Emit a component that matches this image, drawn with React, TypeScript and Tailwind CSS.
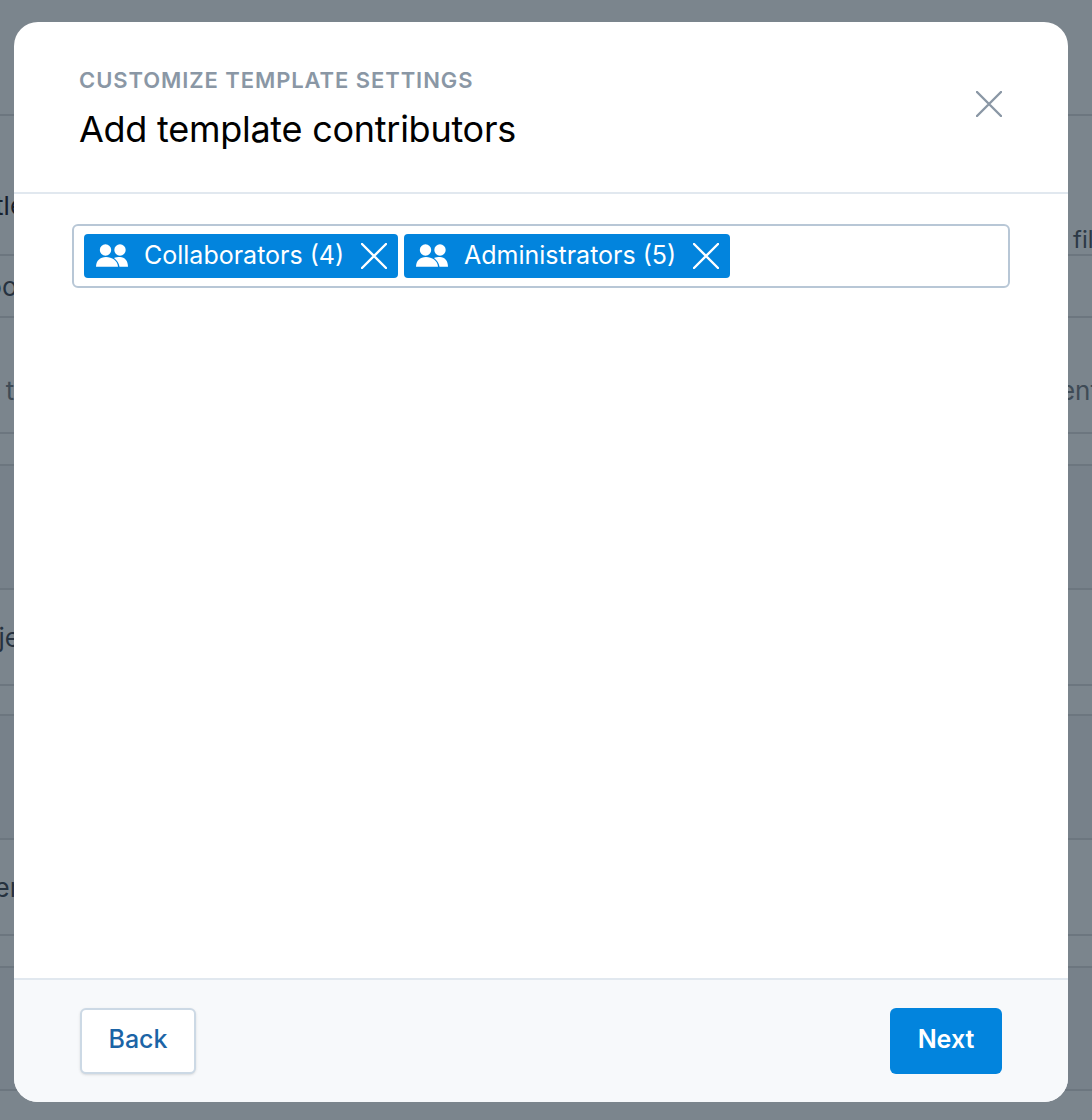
const font = { fontFamily: 'Inter, sans-serif' };

const rows = [
  { h: 'h-[116px]', bg: 'bg-[#7b858d]', left: '', right: '' },
  { h: 'h-[140px]', bg: 'bg-[#7b858d]', left: 'Title', right: '', leftCls: 'text-[#16202c] -ml-[28px]', align: 'items-start pt-[70px]' },
  { h: 'h-[62px]', bg: 'bg-[#7b858d]', left: 'Food', right: '', leftCls: 'text-[#26323f] -ml-[28px]', align: 'items-center' },
  { h: 'h-[116px]', bg: 'bg-[#7b858d]', left: 'Set t', right: 'Content', leftCls: 'text-[#3f4b56] -ml-[42px]', rightCls: 'text-[#3f4b56] -mr-[7px]', align: 'items-start pt-[53px]' },
  { h: 'h-[32px]', bg: 'bg-[#7b858d]', left: '', right: '' },
  { h: 'h-[124px]', bg: 'bg-[#77818a]', left: '', right: '' },
  { h: 'h-[96px]', bg: 'bg-[#7b858d]', left: 'Project', right: '', leftCls: 'text-[#26323f] -ml-[43px]', align: 'items-center' },
  { h: 'h-[30px]', bg: 'bg-[#7b858d]', left: '', right: '' },
  { h: 'h-[124px]', bg: 'bg-[#77818a]', left: '', right: '' },
  { h: 'h-[96px]', bg: 'bg-[#7b858d]', left: 'Owner', right: '', leftCls: 'text-[#26323f] -ml-[62px]', align: 'items-center' },
  { h: 'h-[32px]', bg: 'bg-[#7b858d]', left: '', right: '' },
  { h: 'h-[123px]', bg: 'bg-[#77818a]', left: '', right: '' },
];

function Users() {
  return (
    <svg width="32" height="24" viewBox="0 0 32 24" fill="white" aria-hidden="true">
      <circle cx="9.500" cy="6" r="5.700" />
      <circle cx="24" cy="6" r="5.700" />
      <path d="M0 22.800c0-6 4-9.800 10-9.800S21.500 16.500 22 22.800z" />
      <path d="M18 14c1.700-.7 3.800-1 6-1 4.800 0 8 3.800 8 9.800h-8.500c-.5-3.500-2.300-6.300-5.500-8.800z" />
    </svg>
  );
}

function Cross({ size, color, width }: { size: number; color: string; width: number }) {
  return (
    <svg width={size} height={size} viewBox={`0 0 ${size} ${size}`} fill="none" stroke={color} strokeWidth={width} strokeLinecap="round" aria-hidden="true">
      <path d={`M1 1L${size - 1} ${size - 1}M${size - 1} 1L1 ${size - 1}`} />
    </svg>
  );
}

function Chip({ label, w }: { label: string; w: string }) {
  return (
    <div className={`flex h-[44px] items-center rounded-[4px] bg-[#0284dd] pl-[12px] text-white ${w}`}>
      <Users />
      <span className="mb-[2px] ml-[16px] whitespace-nowrap text-[25px] leading-none">{label}</span>
      <span className="ml-auto mr-[11px]">
        <Cross size={26} color="white" width={2.400} />
      </span>
    </div>
  );
}

export default function App() {
  return (
    <div className="relative h-[1120px] w-[1092px] overflow-hidden bg-[#7b858d]" style={font}>
      <div className="flex flex-col">
        {rows.map((r, i) => (
          <div key={i} className={`flex justify-between border-b-2 border-[#6c767f] text-[26px] ${r.h} ${r.bg} ${r.align ?? ''}`}>
            <span className={`whitespace-nowrap ${r.leftCls ?? ''}`}>{r.left}</span>
            {r.right && <span className={`whitespace-nowrap ${r.rightCls ?? ''}`}>{r.right}</span>}
          </div>
        ))}
      </div>
      <span className="absolute left-[1073px] top-[222px] text-[24px] whitespace-nowrap text-[#2c3946]">filter</span>

      <div className="absolute left-[14px] top-[22px] flex h-[1080px] w-[1054px] flex-col overflow-hidden rounded-[24px] bg-white">
        <header className="relative h-[172px] shrink-0 border-b-2 border-[#e1e8ef] pl-[66px] pt-[44px]">
          <p className="-ml-px text-[22px] font-semibold uppercase leading-[28px] tracking-[0.92px] text-[#8a97a5]">Customize template settings</p>
          <h2 className="-ml-px mt-[13px] text-[36px] leading-[44px] tracking-[-0.26px] text-black">Add template contributors</h2>
          <button className="absolute left-[962px] top-[69px]">
            <Cross size={26} color="#8a97a5" width={2.400} />
          </button>
        </header>
        <div className="flex-1 px-[58px] pt-[30px]">
          <div className="flex h-[64px] w-[938px] items-center gap-[6px] rounded-[6px] border-2 border-[#b8c7d6] pl-[10px]">
            <Chip label="Collaborators (4)" w="w-[314px]" />
            <Chip label="Administrators (5)" w="w-[326px]" />
          </div>
        </div>
        <footer className="flex h-[124px] shrink-0 items-start justify-between border-t-2 border-[#e1e8ef] bg-[#f7f9fb] pl-[66px] pr-[66px] pt-[28px]">
          <button className="flex h-[66px] w-[116px] items-center justify-center rounded-[6px] border-2 border-[#ccd9e5] bg-white pb-[2px] text-[25px] font-medium text-[#1b64a6] shadow-sm">Back</button>
          <button className="flex h-[66px] w-[112px] items-center justify-center rounded-[6px] bg-[#0284dd] pb-[2px] text-[25px] font-semibold text-white">Next</button>
        </footer>
      </div>
    </div>
  );
}
